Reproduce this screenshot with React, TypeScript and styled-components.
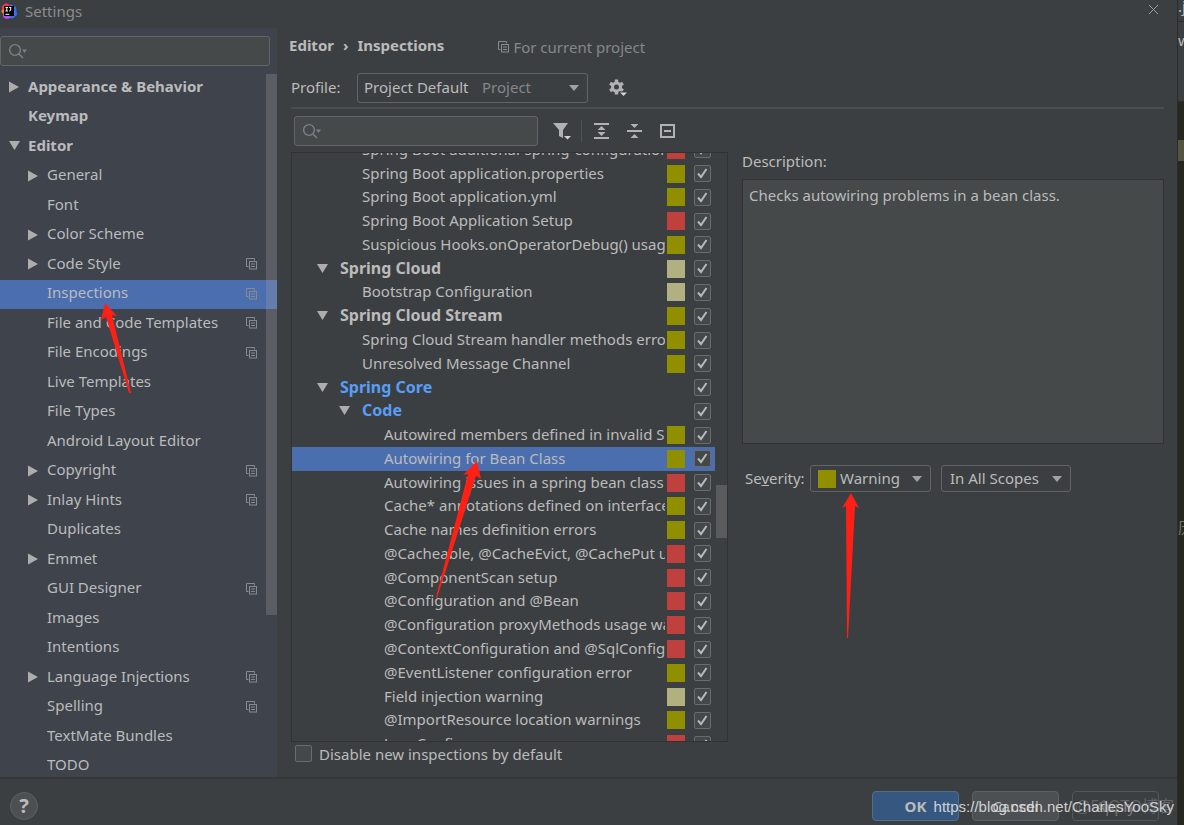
import React from "react";
import styled, { createGlobalStyle, css } from "styled-components";

const color = {
  panel: "#3c3f41",
  side: "#3e434c",
  field: "#45494a",
  border: "#646464",
  text: "#bbbbbb",
  muted: "#85888a",
  selected: "#4b6eaf",
  link: "#589df6",
  dark: "#323232",
  arrow: "#ff2015",
};

const GlobalStyle = createGlobalStyle`
  * { box-sizing: border-box; }
  body { margin: 0; background: #26271f; }
  body, button, input, select, textarea {
    font-family: "Noto Sans", "Noto Sans CJK SC", sans-serif;
    font-size: 15px;
    line-height: 20px;
    color: ${color.text};
  }
  ul { list-style: none; margin: 0; padding: 0; }
`;

/* ---------- window ---------- */

const Page = styled.div`
  position: relative;
  display: flex;
  height: 100vh;
  min-height: 480px;
  overflow: hidden;
`;

const Dialog = styled.div`
  flex: 1;
  min-width: 0;
  display: flex;
  flex-direction: column;
  background: ${color.panel};
`;

const TitleBar = styled.header`
  flex: none;
  height: 28px;
  padding: 0 18px 6px 1px;
  display: flex;
  align-items: center;
  gap: 8px;
  color: #8b8d8e;
`;

const CloseButton = styled.button`
  margin: 0 0 4px auto;
  padding: 0;
  border: 0;
  background: none;
  display: flex;
`;

const Body = styled.div`
  flex: 1;
  min-height: 0;
  display: flex;
`;

/* ---------- fields ---------- */

const SearchField = styled.label<{ $width: number }>`
  flex: none;
  width: ${(p) => p.$width}px;
  height: 30px;
  display: flex;
  align-items: center;
  gap: 4px;
  padding: 0 7px;
  background: ${color.field};
  border: 1px solid ${color.border};
  border-radius: 3px;

  input {
    flex: 1;
    min-width: 0;
    border: 0;
    outline: 0;
    padding: 0;
    background: transparent;
  }
`;

const Combo = styled.div<{ $width: number; $tall?: boolean }>`
  flex: none;
  width: ${(p) => p.$width}px;
  height: ${(p) => (p.$tall ? 30 : 27)}px;
  display: grid;

  > * { grid-area: 1 / 1; }
`;

const ComboSelect = styled.select<{ $indent: number }>`
  appearance: none;
  width: 100%;
  padding: 0 0 2px ${(p) => p.$indent}px;
  background: ${color.panel};
  border: 1px solid ${color.border};
  border-radius: 3px;
`;

const ComboFace = styled.div<{ $indent: number }>`
  display: flex;
  align-items: center;
  padding: 0 8px 0 ${(p) => p.$indent}px;
  pointer-events: none;
  color: ${color.muted};

  svg { margin-left: auto; }
`;

const ComboHint = styled.span`
  padding-bottom: 2px;
`;

const CheckFrame = styled.span`
  flex: none;
  display: grid;
  width: 17px;
  height: 17px;

  > * { grid-area: 1 / 1; }
  svg { display: none; pointer-events: none; }
  input:checked + svg { display: block; }
`;

const CheckInput = styled.input`
  appearance: none;
  margin: 0;
  width: 17px;
  height: 17px;
  background: #43494a;
  border: 1px solid #6b6b6b;
  border-radius: 2px;
`;

const Swatch = styled.span<{ $color?: string }>`
  flex: none;
  width: 18px;
  height: 18px;
  background: ${(p) => p.$color ?? "transparent"};
`;

/* ---------- sidebar ---------- */

const Sidebar = styled.nav`
  flex: none;
  width: 277px;
  display: flex;
  flex-direction: column;
  padding-top: 8px;
  background: ${color.side};
`;

const SideScroll = styled.div`
  position: relative;
  flex: 1;
  min-height: 0;
  margin-top: 7px;
  overflow: hidden;
`;

const SideList = styled.ul`
  display: grid;
  grid-template-rows: repeat(12, 30px 29px);
`;

const SideRow = styled.li<{ $level: number; $selected?: boolean; $bold?: boolean }>`
  display: flex;
  align-items: center;
  gap: 8px;
  padding: 0 19px 2px ${(p) => 9 + p.$level * 19}px;
  background: ${(p) => (p.$selected ? color.selected : "none")};
  font-weight: ${(p) => (p.$bold ? 700 : 400)};
  white-space: nowrap;

  > svg:last-child { margin-left: auto; }
`;

const SideName = styled.span`
  padding-bottom: 3px;
`;

const Twisty = styled.span`
  flex: none;
  width: 11px;
  display: flex;
`;

const Thumb = styled.div<{ $top: number; $height: number; $width: number }>`
  position: absolute;
  right: 0;
  top: ${(p) => p.$top}px;
  width: ${(p) => p.$width}px;
  height: ${(p) => p.$height}px;
  background: rgba(166, 166, 166, 0.28);
`;

/* ---------- main column ---------- */

const Main = styled.main`
  flex: 1;
  min-width: 0;
  display: flex;
  flex-direction: column;
  padding: 7px 13px 0 14px;
`;

const Crumbs = styled.div`
  display: flex;
  align-items: center;
  height: 20px;
  gap: 9px;
  margin-left: -2px;
  font-weight: 700;
`;

const ProjectNote = styled.span`
  display: flex;
  align-items: center;
  gap: 3px;
  margin-left: 45px;
  padding-top: 3px;
  font-weight: 400;
  color: ${color.muted};
`;

const ProfileRow = styled.div`
  display: flex;
  align-items: center;
  height: 30px;
  margin-top: 18px;

  label {
    width: 66px;
    padding-bottom: 2px;
  }
`;

const IconButton = styled.button`
  padding: 0;
  border: 0;
  background: none;
  display: flex;
`;

const ProfileActions = styled(IconButton)`
  margin-left: 20px;
`;

const Columns = styled.div`
  flex: 1;
  min-height: 0;
  display: flex;
  gap: 14px;
  margin-top: 4px;
  border-top: 2px solid #4b4e50;
`;

const Left = styled.section`
  flex: none;
  width: 437px;
  display: flex;
  flex-direction: column;
  padding-top: 7px;
`;

const Toolbar = styled.div`
  display: flex;
  align-items: center;
  padding-left: 3px;
`;

const Tools = styled.div`
  display: flex;
  align-items: center;
  gap: 15px;
  margin-left: 14px;
`;

const Rule = styled.span`
  width: 1px;
  height: 22px;
  margin: 0 -5px;
  background: #515455;
`;

const InspectionPane = styled.div`
  position: relative;
  flex: 1;
  min-height: 0;
  margin-top: 6px;
  border: 1px solid ${color.dark};
  overflow: hidden;
`;

const InspectionList = styled.ul`
  display: grid;
  grid-template-columns: minmax(0, 1fr);
  grid-auto-rows: 1fr;
  height: 618px;
  margin: -15px 12px 0 0;
`;

const InspectionRow = styled.li<{ $level: number; $selected?: boolean; $group?: boolean; $changed?: boolean }>`
  display: flex;
  align-items: center;
  min-height: 0;
  padding: 0 4px 0 ${(p) => (p.$group ? 3 : 26) + p.$level * 22}px;
  background: ${(p) => (p.$selected ? color.selected : "none")};
  ${(p) =>
    p.$group &&
    css`
      font-size: 16px;
      font-weight: 700;
    `}
  ${(p) =>
    p.$changed &&
    css`
      color: ${color.link};
    `}
`;

const InspectionName = styled.label`
  flex: 1;
  min-width: 0;
  margin-right: 2px;
  padding-bottom: 2px;
  overflow: hidden;
  white-space: nowrap;
`;

const InspectionTwisty = styled(Twisty)`
  width: 23px;
`;

const SeverityCell = styled(Swatch)`
  margin-right: 9px;
`;

const DisableRow = styled.label`
  flex: none;
  display: flex;
  align-items: center;
  gap: 7px;
  height: 35px;
  padding: 0 0 12px 4px;
`;

const Right = styled.section`
  flex: 1;
  min-width: 0;
  display: flex;
  flex-direction: column;
  padding-top: 42px;
`;

const Description = styled.textarea`
  width: 100%;
  height: 265px;
  margin-top: 8px;
  padding: 5px 6px;
  resize: none;
  outline: 0;
  background: ${color.field};
  border: 1px solid ${color.dark};
`;

const SeverityRow = styled.div`
  display: flex;
  align-items: center;
  margin-top: 21px;
  padding-left: 3px;

  label {
    width: 65px;
    padding-bottom: 2px;
  }
  > * + * + * { margin-left: 10px; }
`;

/* ---------- footer ---------- */

const Footer = styled.footer`
  flex: none;
  height: 48px;
  display: flex;
  align-items: center;
  gap: 13px;
  padding: 8px 18px 0 10px;
  border-top: 2px solid #343637;
`;

const HelpButton = styled.button`
  width: 28px;
  height: 28px;
  margin-right: auto;
  padding: 0;
  border: 1px solid #5e6060;
  border-radius: 50%;
  background: #4c5052;
  font-size: 20px;
  font-weight: 700;
`;

const DialogButton = styled.button<{ $kind?: "primary" | "disabled" }>`
  width: 87px;
  height: 30px;
  padding: 0;
  border: 1px solid ${(p) => (p.$kind === "primary" ? "#4c708c" : p.$kind === "disabled" ? "#545758" : "#5e6060")};
  border-radius: 4px;
  background: ${(p) => (p.$kind === "primary" ? "#365880" : p.$kind === "disabled" ? color.panel : "#4c5052")};
  color: ${(p) => (p.$kind === "disabled" ? "#777777" : color.text)};
  font-weight: ${(p) => (p.$kind === "primary" ? 700 : 400)};
`;

/* ---------- editor behind the dialog ---------- */

const EditorEdge = styled.aside`
  flex: none;
  width: 7px;
  display: flex;
  flex-direction: column;
  overflow: hidden;
  white-space: nowrap;
  border-left: 1px solid #2c2d2b;
  background: #26271f;
`;

const EdgeTab = styled.div<{ $height: number }>`
  flex: none;
  height: ${(p) => p.$height}px;
  overflow: hidden;
  background: ${color.panel};
  border-bottom: 1px solid #2b2b2b;
`;

const EdgeName = styled.div`
  margin-top: -4px;
`;

const EdgePath = styled(EdgeTab)`
  padding-top: 8px;
`;

const EdgeLine = styled.div`
  flex: none;
  height: 21px;
  margin-top: 38px;
  background: #55543f;
`;

const EdgeCode = styled.div`
  margin-top: 356px;
  color: #77746a;
`;

/* ---------- overlays ---------- */

const Marks = styled.svg`
  position: absolute;
  left: 0;
  top: 0;
  pointer-events: none;
`;

const Watermark = styled.span<{ $faint?: boolean }>`
  position: absolute;
  right: 10px;
  bottom: 8px;
  pointer-events: none;
  white-space: nowrap;
  font-family: "Liberation Sans", "Noto Sans CJK SC", sans-serif;
  font-size: ${(p) => (p.$faint ? 16 : 15)}px;
  color: ${(p) => (p.$faint ? "rgba(200, 200, 200, 0.28)" : "rgba(225, 225, 225, 0.9)")};
`;

/* ---------- icons ---------- */

const Logo = () => (
  <svg width="16" height="16" viewBox="0 0 16 16" aria-hidden="true">
    <path d="M1 3 5 0l5 3-4 7-5-1z" fill="#fe315d" />
    <path d="M0 8l4-3 3 6-3 3z" fill="#f97a12" />
    <path d="M2 10l6-1 2 6-5 1-3-2z" fill="#b74af7" />
    <path d="M9 1l6 3 1 8-5 4-3-4z" fill="#3b6cf5" />
    <rect x="3" y="3" width="10" height="10" fill="#050505" />
    <path
      d="M4.500 4.500h2.500M5.750 4.500v3.500M4.500 8h2.500M8.200 4.500h2M9.700 4.500v2.500q0 1-1.500 1M4.500 11.300h3.800"
      stroke="#fff"
      fill="none"
    />
  </svg>
);

const CloseIcon = () => (
  <svg width="11" height="11" viewBox="0 0 11 11" stroke="#9a9c9d" aria-hidden="true">
    <path d="M1 1l9 9M10 1l-9 9" />
  </svg>
);

const SearchIcon = () => (
  <svg width="21" height="16" viewBox="0 0 21 16" fill="none" aria-hidden="true">
    <circle cx="7" cy="7" r="5.400" stroke="#7a8288" strokeWidth="1.400" />
    <path d="M11 11l4 4" stroke="#7a8288" strokeWidth="1.600" />
    <path d="M14 6.500h5l-2.500 3.500z" fill="#7a8288" />
  </svg>
);

const TwistyIcon = ({ open }: { open: boolean }) => (
  <svg width="11" height="12" viewBox="0 0 11 12" fill="#adadad" aria-hidden="true">
    <path d={open ? "M0 1h11L5.500 10z" : "M0 .500v11L10 6z"} />
  </svg>
);

const CopyIcon = () => (
  <svg width="12" height="12" viewBox="0 0 12 12" fill="none" stroke="#868b8f" aria-hidden="true">
    <path d="M2.500 8.500h-2v-8h8v2" />
    <rect x="3.500" y="3.500" width="7" height="7.500" />
    <path d="M5 6h4M5 8.500h4" />
  </svg>
);

const DownIcon = () => (
  <svg width="12" height="8" viewBox="0 0 12 8" fill="#a0a2a3" aria-hidden="true">
    <path d="M1 1h10L6 7z" />
  </svg>
);

const TickIcon = () => (
  <svg width="17" height="17" viewBox="0 0 17 17" fill="none" stroke="#b8b8b8" strokeWidth="2" aria-hidden="true">
    <path d="M4 8.500l3 3.500 5.500-8" />
  </svg>
);

const GearIcon = () => (
  <svg width="20" height="20" viewBox="0 0 20 20" aria-hidden="true">
    <circle cx="8.500" cy="9" r="4" fill="none" stroke="#b0b2b3" strokeWidth="3" />
    <path
      d="M8.500 1.500v3M8.500 13.500v3M2 5.200l2.600 1.500M12.400 11.300l2.600 1.500M2 12.800l2.600-1.500M12.400 6.700L15 5.200"
      stroke="#b0b2b3"
      strokeWidth="3.400"
    />
    <path d="M10.500 13.500h9v3L15 19z" fill="#3c3f41" />
    <path d="M12 14.500h7L15.500 18z" fill="#d0d2d3" />
  </svg>
);

const FilterIcon = () => (
  <svg width="19" height="18" viewBox="0 0 19 18" aria-hidden="true">
    <path d="M1 1h15L11 8v8l-4-2V8z" fill="#b0b2b3" />
    <path d="M12 14h7l-3.500 3.500z" fill="#d0d2d3" />
  </svg>
);

const ExpandIcon = () => (
  <svg width="18" height="18" viewBox="0 0 18 18" fill="#b0b2b3" aria-hidden="true">
    <path d="M2 1h15v2H2zM2 15h15v2H2zM9.500 4l4 4h-8zM9.500 14l4-4h-8z" />
  </svg>
);

const CollapseIcon = () => (
  <svg width="18" height="18" viewBox="0 0 18 18" fill="#b0b2b3" aria-hidden="true">
    <path d="M2 8h15v2H2zM5.500 2h8l-4 4zM5.500 16h8l-4-4z" />
  </svg>
);

const BoxMinusIcon = () => (
  <svg width="18" height="18" viewBox="0 0 18 18" fill="none" stroke="#b0b2b3" strokeWidth="2" aria-hidden="true">
    <path d="M3 3h13v12H3zM6 9h7" />
  </svg>
);

/* ---------- data ---------- */

type SideItem = { name: string; level: number; open?: boolean; copy?: boolean; bold?: boolean; selected?: boolean };

const sideItems: SideItem[] = [
  { name: "Appearance & Behavior", level: 0, open: false, bold: true },
  { name: "Keymap", level: 0, bold: true },
  { name: "Editor", level: 0, open: true, bold: true },
  { name: "General", level: 1, open: false },
  { name: "Font", level: 1 },
  { name: "Color Scheme", level: 1, open: false },
  { name: "Code Style", level: 1, open: false, copy: true },
  { name: "Inspections", level: 1, copy: true, selected: true },
  { name: "File and Code Templates", level: 1, copy: true },
  { name: "File Encodings", level: 1, copy: true },
  { name: "Live Templates", level: 1 },
  { name: "File Types", level: 1 },
  { name: "Android Layout Editor", level: 1 },
  { name: "Copyright", level: 1, open: false, copy: true },
  { name: "Inlay Hints", level: 1, open: false, copy: true },
  { name: "Duplicates", level: 1 },
  { name: "Emmet", level: 1, open: false },
  { name: "GUI Designer", level: 1, copy: true },
  { name: "Images", level: 1 },
  { name: "Intentions", level: 1 },
  { name: "Language Injections", level: 1, open: false, copy: true },
  { name: "Spelling", level: 1, copy: true },
  { name: "TextMate Bundles", level: 1 },
  { name: "TODO", level: 1 },
];

const tone = { warning: "#8f8f00", error: "#bf403d", weak: "#b1b081" };

type Inspection = {
  name: string;
  level: number;
  severity?: keyof typeof tone;
  group?: boolean;
  changed?: boolean;
  selected?: boolean;
};

const inspections: Inspection[] = [
  { name: "Spring Boot additional-spring-configuration", level: 2, severity: "error" },
  { name: "Spring Boot application.properties", level: 2, severity: "warning" },
  { name: "Spring Boot application.yml", level: 2, severity: "warning" },
  { name: "Spring Boot Application Setup", level: 2, severity: "error" },
  { name: "Suspicious Hooks.onOperatorDebug() usage", level: 2, severity: "warning" },
  { name: "Spring Cloud", level: 1, severity: "weak", group: true },
  { name: "Bootstrap Configuration", level: 2, severity: "weak" },
  { name: "Spring Cloud Stream", level: 1, severity: "warning", group: true },
  { name: "Spring Cloud Stream handler methods errors", level: 2, severity: "warning" },
  { name: "Unresolved Message Channel", level: 2, severity: "warning" },
  { name: "Spring Core", level: 1, group: true, changed: true },
  { name: "Code", level: 2, group: true, changed: true },
  { name: "Autowired members defined in invalid Spring bean", level: 3, severity: "warning" },
  { name: "Autowiring for Bean Class", level: 3, severity: "warning", selected: true },
  { name: "Autowiring issues in a spring bean class", level: 3, severity: "error" },
  { name: "Cache* annotations defined on interfaces", level: 3, severity: "warning" },
  { name: "Cache names definition errors", level: 3, severity: "warning" },
  { name: "@Cacheable, @CacheEvict, @CachePut usage", level: 3, severity: "error" },
  { name: "@ComponentScan setup", level: 3, severity: "error" },
  { name: "@Configuration and @Bean", level: 3, severity: "error" },
  { name: "@Configuration proxyMethods usage warnings", level: 3, severity: "error" },
  { name: "@ContextConfiguration and @SqlConfig", level: 3, severity: "error" },
  { name: "@EventListener configuration error", level: 3, severity: "warning" },
  { name: "Field injection warning", level: 3, severity: "weak" },
  { name: "@ImportResource location warnings", level: 3, severity: "warning" },
  { name: "Java Config", level: 3, severity: "error" },
];

/* ---------- parts ---------- */

const CheckBox = ({ id, checked }: { id: string; checked?: boolean }) => (
  <CheckFrame>
    <CheckInput id={id} type="checkbox" defaultChecked={checked} />
    <TickIcon />
  </CheckFrame>
);

const SideTree = () => (
  <SideScroll>
    <SideList>
      {sideItems.map((item) => (
        <SideRow key={item.name} $level={item.level} $selected={item.selected} $bold={item.bold}>
          <Twisty>{item.open !== undefined && <TwistyIcon open={item.open} />}</Twisty>
          <SideName>{item.name}</SideName>
          {item.copy && <CopyIcon />}
        </SideRow>
      ))}
    </SideList>
    <Thumb $top={1} $height={541} $width={11} />
  </SideScroll>
);

const InspectionTree = () => (
  <InspectionPane>
    <InspectionList>
      {inspections.map((item, i) => (
        <InspectionRow
          key={item.name}
          $level={item.level}
          $selected={item.selected}
          $group={item.group}
          $changed={item.changed}
        >
          {item.group && (
            <InspectionTwisty>
              <TwistyIcon open />
            </InspectionTwisty>
          )}
          <InspectionName htmlFor={`inspection-${i}`}>{item.name}</InspectionName>
          <SeverityCell $color={item.severity && tone[item.severity]} />
          <CheckBox id={`inspection-${i}`} checked />
        </InspectionRow>
      ))}
    </InspectionList>
    <Thumb $top={332} $height={53} $width={11} />
  </InspectionPane>
);

export default function App() {
  return (
    <Page>
      <GlobalStyle />
      <Dialog>
        <TitleBar>
          <Logo />
          <span>Settings</span>
          <CloseButton aria-label="Close">
            <CloseIcon />
          </CloseButton>
        </TitleBar>

        <Body>
          <Sidebar>
            <SearchField $width={270}>
              <SearchIcon />
              <input type="text" aria-label="Search settings" />
            </SearchField>
            <SideTree />
          </Sidebar>

          <Main>
            <Crumbs>
              <span>Editor</span>
              <span>›</span>
              <span>Inspections</span>
              <ProjectNote>
                <CopyIcon />
                For current project
              </ProjectNote>
            </Crumbs>

            <ProfileRow>
              <label htmlFor="profile">Profile:</label>
              <Combo $width={231} $tall>
                <ComboSelect id="profile" $indent={6}>
                  <option>Project Default</option>
                </ComboSelect>
                <ComboFace $indent={125}>
                  <ComboHint>Project</ComboHint>
                  <DownIcon />
                </ComboFace>
              </Combo>
              <ProfileActions aria-label="Profile actions">
                <GearIcon />
              </ProfileActions>
            </ProfileRow>

            <Columns>
              <Left>
                <Toolbar>
                  <SearchField $width={244}>
                    <SearchIcon />
                    <input type="text" aria-label="Search inspections" />
                  </SearchField>
                  <Tools>
                    <IconButton aria-label="Filter">
                      <FilterIcon />
                    </IconButton>
                    <Rule />
                    <IconButton aria-label="Expand all">
                      <ExpandIcon />
                    </IconButton>
                    <IconButton aria-label="Collapse all">
                      <CollapseIcon />
                    </IconButton>
                    <IconButton aria-label="Reset to empty">
                      <BoxMinusIcon />
                    </IconButton>
                  </Tools>
                </Toolbar>
                <InspectionTree />
                <DisableRow htmlFor="disable-new">
                  <CheckBox id="disable-new" />
                  Disable new inspections by default
                </DisableRow>
              </Left>

              <Right>
                <label htmlFor="description">Description:</label>
                <Description id="description" readOnly defaultValue="Checks autowiring problems in a bean class." />
                <SeverityRow>
                  <label htmlFor="severity">
                    Se<u>v</u>erity:
                  </label>
                  <Combo $width={121}>
                    <ComboSelect id="severity" $indent={29}>
                      <option>Warning</option>
                    </ComboSelect>
                    <ComboFace $indent={8}>
                      <Swatch $color={tone.warning} />
                      <DownIcon />
                    </ComboFace>
                  </Combo>
                  <Combo $width={130}>
                    <ComboSelect aria-label="Scope" $indent={8}>
                      <option>In All Scopes</option>
                    </ComboSelect>
                    <ComboFace $indent={8}>
                      <DownIcon />
                    </ComboFace>
                  </Combo>
                </SeverityRow>
              </Right>
            </Columns>
          </Main>
        </Body>

        <Footer>
          <HelpButton aria-label="Help">?</HelpButton>
          <DialogButton $kind="primary">OK</DialogButton>
          <DialogButton>Cancel</DialogButton>
          <DialogButton $kind="disabled">Apply</DialogButton>
        </Footer>
      </Dialog>

      <EditorEdge>
        <EdgeTab $height={22}>
          <EdgeName>.j</EdgeName>
        </EdgeTab>
        <EdgePath $height={80}>w</EdgePath>
        <EdgeLine />
        <EdgeCode>历</EdgeCode>
      </EditorEdge>

      <Marks width="900" height="650" viewBox="0 0 900 650" fill={color.arrow} aria-hidden="true">
        <path d="M105 303l12 13-5-1 19 78h-2L106 317l-5 3z" />
        <path d="M477 461l4 18-5-3-39 122-1-1 32-123-5 1z" />
        <path d="M851 493l8 15-4-2-7 132h-1l-1-132-4 2z" />
      </Marks>
      <Watermark $faint>@51CTO博客</Watermark>
      <Watermark>https://blog.csdn.net/CharlesYooSky</Watermark>
    </Page>
  );
}
